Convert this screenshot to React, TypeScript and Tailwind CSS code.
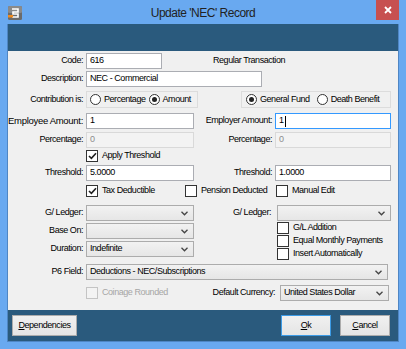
import React from "react";

const LBL = "text-right shrink-0 whitespace-nowrap";

function TextBox({
  w,
  value,
  disabled,
  focused,
}: {
  w: string;
  value: string;
  disabled?: boolean;
  focused?: boolean;
}) {
  const cls = focused
    ? "border-[#3399ff] bg-white text-black"
    : disabled
    ? "border-[#d9d9d9] bg-[#f3f3f3] text-[#8c8c8c]"
    : "border-[#abadb3] bg-white text-black";
  return (
    <div className={`${w} h-[16px] border ${cls} flex items-center pl-[3px] shrink-0 overflow-hidden`}>
      <span>{value}</span>
      {focused && <span className="inline-block w-px h-[11px] bg-black ml-px" />}
    </div>
  );
}

function Combo({ w, value }: { w: string; value?: string }) {
  return (
    <div className={`${w} h-[16px] border border-[#acacac] bg-gradient-to-b from-[#f2f2f2] to-[#e6e6e6] flex items-center justify-between pl-[3px] pr-[5px] shrink-0`}>
      <span className="text-black">{value ?? ""}</span>
      <svg width="7" height="5" viewBox="0 0 7 5">
        <path d="M0.5 0.8 L3.5 3.8 L6.5 0.8" stroke="#444" strokeWidth="1.3" fill="none" />
      </svg>
    </div>
  );
}

function Check({
  checked,
  disabled,
  label,
}: {
  checked?: boolean;
  disabled?: boolean;
  label: string;
}) {
  return (
    <div className="flex items-center h-[12px] shrink-0">
      <div
        className={`w-[12px] h-[12px] border ${
          disabled ? "border-[#c4c4c4] bg-[#f3f3f3]" : "border-[#333333] bg-white"
        } flex items-center justify-center shrink-0`}
      >
        {checked && (
          <svg width="9" height="8" viewBox="0 0 9 8">
            <path d="M1 4 L3.4 6.4 L8 1.2" stroke="#1f1f1f" strokeWidth="1.6" fill="none" />
          </svg>
        )}
      </div>
      <span className={`ml-[4px] whitespace-nowrap ${disabled ? "text-[#a6a6a6]" : "text-black"}`}>{label}</span>
    </div>
  );
}

function Radio({ checked, label }: { checked?: boolean; label: string }) {
  return (
    <div className="flex items-center shrink-0">
      <div className="w-[11px] h-[11px] rounded-full border border-[#333333] bg-white flex items-center justify-center shrink-0">
        {checked && <div className="w-[5px] h-[5px] rounded-full bg-[#222]" />}
      </div>
      <span className="ml-[3px] whitespace-nowrap">{label}</span>
    </div>
  );
}

function Btn({ w, children, def }: { w: string; children: React.ReactNode; def?: boolean }) {
  return (
    <div
      className={`${w} h-[21px] border ${
        def ? "border-[#3c9be6]" : "border-[#acacac]"
      } bg-gradient-to-b from-[#f0f0f0] to-[#e5e5e5] flex items-center justify-center text-black`}
    >
      {children}
    </div>
  );
}

export default function App() {
  return (
    <div className="w-[406px] h-[349px] bg-[#69a9f0] flex flex-col font-['Liberation_Sans',Arial,sans-serif] text-[9px] tracking-[-0.45px] text-black overflow-hidden">
      {/* title bar */}
      <div className="h-[24px] flex items-start shrink-0">
        <div className="w-[56px] pl-[8px] pt-[6px] shrink-0">
          <svg width="14" height="14" viewBox="0 0 14 14">
            <rect x="0" y="0" width="14" height="14" rx="1.5" fill="#6b6b6b" />
            <rect x="0" y="0" width="14" height="7" rx="1.5" fill="#8a8a8a" />
            <path d="M4 3 H10 V6 H5 V8 H10 V11 H4" stroke="#ffffff" strokeWidth="1.6" fill="none" />
            <rect x="0" y="9" width="5" height="2.5" fill="#f08a1c" />
          </svg>
        </div>
        <div className="flex-1 text-center text-[12px] tracking-[-0.5px] text-[#222] pt-[4px]">Update 'NEC' Record</div>
        <div className="w-[56px] flex justify-end pr-[7px] shrink-0">
          <div className="w-[23px] h-[20px] bg-[#c75050] flex items-center justify-center">
            <svg width="8" height="8" viewBox="0 0 8 8">
              <path d="M1 1 L7 7 M7 1 L1 7" stroke="#ffffff" strokeWidth="1.8" />
            </svg>
          </div>
        </div>
      </div>

      {/* client */}
      <div className="ml-[7px] w-[392px] h-[318px] border-x border-b border-[#4f86c4] flex flex-col shrink-0">
        <div className="h-[27px] bg-[#2a5a7d] shrink-0" />

        <div className="h-[259px] bg-[#f0f0f0] flex flex-col shrink-0">
          {/* Code */}
          <div className="flex items-center mt-[2px] h-[16px]">
            <div className={`${LBL} w-[75px]`}>Code:</div>
            <div className="ml-[3px]">
              <TextBox w="w-[76px]" value="616" />
            </div>
            <div className="ml-[51px]">Regular Transaction</div>
          </div>
          {/* Description */}
          <div className="flex items-center mt-[2px] h-[16px]">
            <div className={`${LBL} w-[75px]`}>Description:</div>
            <div className="ml-[3px]">
              <TextBox w="w-[176px]" value="NEC - Commercial" />
            </div>
          </div>
          {/* Contribution */}
          <div className="flex items-center mt-[4px] h-[17px]">
            <div className={`${LBL} w-[75px]`}>Contribution is:</div>
            <div className="ml-[3px] w-[112px] h-[17px] border border-[#dcdcdc] flex items-center pl-[3px] gap-[3px] shrink-0">
              <Radio label="Percentage" />
              <Radio checked label="Amount" />
            </div>
            <div className="ml-[43px] w-[150px] h-[17px] border border-[#dcdcdc] flex items-center pl-[4px] gap-[7px] shrink-0">
              <Radio checked label="General Fund" />
              <Radio label="Death Benefit" />
            </div>
          </div>
          {/* Employee Amount */}
          <div className="flex items-center mt-[5px] h-[16px]">
            <div className={`${LBL} w-[75px] text-[9.5px] tracking-[-0.3px]`}>Employee Amount:</div>
            <div className="ml-[3px]">
              <TextBox w="w-[108px]" value="1" />
            </div>
            <div className={`${LBL} w-[78px]`}>Employer Amount:</div>
            <div className="ml-[3px]">
              <TextBox w="w-[116px]" value="1" focused />
            </div>
          </div>
          {/* Percentage */}
          <div className="flex items-center mt-[3px] h-[16px]">
            <div className={`${LBL} w-[75px]`}>Percentage:</div>
            <div className="ml-[3px]">
              <TextBox w="w-[108px]" value="0" disabled />
            </div>
            <div className={`${LBL} w-[78px]`}>Percentage:</div>
            <div className="ml-[3px]">
              <TextBox w="w-[116px]" value="0" disabled />
            </div>
          </div>
          {/* Apply threshold */}
          <div className="flex items-center mt-[2px] h-[12px] pl-[78px]">
            <Check checked label="Apply Threshold" />
          </div>
          {/* Threshold */}
          <div className="flex items-center mt-[3px] h-[16px]">
            <div className={`${LBL} w-[75px]`}>Threshold:</div>
            <div className="ml-[3px]">
              <TextBox w="w-[108px]" value="5.0000" />
            </div>
            <div className={`${LBL} w-[78px]`}>Threshold:</div>
            <div className="ml-[3px]">
              <TextBox w="w-[116px]" value="1.0000" />
            </div>
          </div>
          {/* Tax row */}
          <div className="flex items-center mt-[3px] h-[13px] pl-[78px]">
            <div className="w-[99px] shrink-0">
              <Check checked label="Tax Deductible" />
            </div>
            <div className="w-[91px] shrink-0">
              <Check label="Pension Deducted" />
            </div>
            <Check label="Manual Edit" />
          </div>
          {/* Lower section */}
          <div className="flex mt-[8px]">
            <div className="flex flex-col gap-[2px] w-[186px] shrink-0">
              <div className="flex items-center h-[16px]">
                <div className={`${LBL} w-[75px]`}>G/ Ledger:</div>
                <div className="ml-[3px]">
                  <Combo w="w-[108px]" />
                </div>
              </div>
              <div className="flex items-center h-[16px]">
                <div className={`${LBL} w-[75px]`}>Base On:</div>
                <div className="ml-[3px]">
                  <Combo w="w-[108px]" />
                </div>
              </div>
              <div className="flex items-center h-[16px]">
                <div className={`${LBL} w-[75px]`}>Duration:</div>
                <div className="ml-[3px]">
                  <Combo w="w-[108px]" value="Indefinite" />
                </div>
              </div>
            </div>
            <div className="flex flex-col">
              <div className="flex items-center h-[16px]">
                <div className={`${LBL} w-[77px]`}>G/ Ledger:</div>
                <div className="ml-[6px]">
                  <Combo w="w-[114px]" />
                </div>
              </div>
              <div className="flex flex-col gap-[1px] mt-[1px] pl-[83px]">
                <Check label="G/L Addition" />
                <Check label="Equal Monthly Payments" />
                <Check label="Insert Automatically" />
              </div>
            </div>
          </div>
          {/* P6 field */}
          <div className="flex items-center mt-[4px] h-[16px]">
            <div className={`${LBL} w-[75px]`}>P6 Field:</div>
            <div className="ml-[3px]">
              <Combo w="w-[302px]" value="Deductions - NEC/Subscriptions" />
            </div>
          </div>
          {/* Coinage / Currency */}
          <div className="flex items-center mt-[5px] h-[16px]">
            <div className="pl-[78px] w-[197px] shrink-0">
              <Check disabled label="Coinage Rounded" />
            </div>
            <div className={`${LBL} w-[70px]`}>Default Currency:</div>
            <div className="ml-[5px]">
              <Combo w="w-[109px]" value="United States Dollar" />
            </div>
          </div>
        </div>

        {/* bottom band */}
        <div className="flex-1 bg-[#2a5a7d] flex items-start pt-[5px] pl-[4px] pr-[8px]">
          <Btn w="w-[65px]">
            <span>
              <span className="underline">D</span>ependencies
            </span>
          </Btn>
          <div className="flex-1" />
          <div className="flex gap-[9px]">
            <Btn w="w-[50px]" def>
              <span>
                <span className="underline">O</span>k
              </span>
            </Btn>
            <Btn w="w-[50px]">
              <span>
                <span className="underline">C</span>ancel
              </span>
            </Btn>
          </div>
        </div>
      </div>
    </div>
  );
}
